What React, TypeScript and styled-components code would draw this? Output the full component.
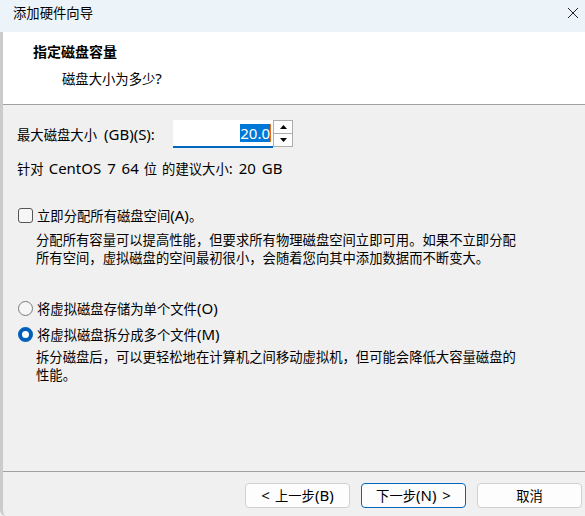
import React from "react";
import styled, { createGlobalStyle } from "styled-components";

const Global = createGlobalStyle`
  html, body { margin: 0; padding: 0; background: #f0f0f0; }
  body { font-family: "Noto Sans CJK SC", "Noto Sans", sans-serif; font-size: 13.33px; color: #000; }
  * { box-sizing: border-box; }
`;

const Window = styled.div`
  width: 585px;
  height: 516px;
  display: flex;
  flex-direction: column;
  overflow: hidden;
  font-family: "Noto Sans CJK SC", "Noto Sans", sans-serif;
  font-size: 13.33px;
`;

/* Latin run: the reference UI font draws Latin glyphs larger than CJK ones */
const L = styled.span`
  font-family: "Noto Sans", sans-serif;
  font-size: 15px;
  line-height: 18px;
`;

const TitleBar = styled.div`
  height: 32px;
  flex: none;
  background: #edf4f9;
  display: flex;
  align-items: center;
  justify-content: space-between;
  padding: 0 6px 0 13px;
`;

const TitleText = styled.span`
  line-height: 18px;
  margin-top: -6px;
`;

const CloseBtn = styled.div`
  width: 12px;
  height: 12px;
  margin-top: -6px;
  display: flex;
`;

const Frame = styled.div`
  flex: 1;
  display: flex;
  flex-direction: column;
  border-left: 3px solid #cbcbcb;
  border-bottom-left-radius: 6px;
  background: #f0f0f0;
`;

const Header = styled.div`
  height: 73px;
  flex: none;
  background: #fff;
  border-bottom: 1px solid #a0a0a0;
  padding: 10px 0 0 30px;
`;

const HeaderTitle = styled.div`
  font-weight: bold;
  font-size: 14px;
  line-height: 18px;
`;

const HeaderSub = styled.div`
  line-height: 18px;
  margin: 9px 0 0 29px;
`;

const Content = styled.div`
  flex: 1;
  padding: 15px 0 0 14px;
  display: flex;
  flex-direction: column;
`;

const SizeRow = styled.div`
  display: flex;
  align-items: center;
  height: 28px;
`;

const Label = styled.span`
  line-height: 18px;
  width: 156px;
  flex: none;
  word-spacing: 4px;
`;

const SpinInput = styled.div`
  width: 100px;
  height: 28px;
  background: #fff;
  border-bottom: 2px solid #0067c0;
  display: flex;
  align-items: center;
  justify-content: flex-end;
  padding-right: 2px;
`;

const Selected = styled.span`
  background: #0078d7;
  color: #fff;
  line-height: 18px;
  font-family: "Noto Sans", sans-serif;
  font-size: 15px;
`;

const Caret = styled.span`
  width: 1px;
  height: 18px;
  background: #e8701a;
`;

const SpinButtons = styled.div`
  width: 20px;
  height: 27px;
  display: flex;
  flex-direction: column;
  border: 1px solid #adadad;
  background: #fdfdfd;
  margin-top: -1px;
`;

const SpinBtn = styled.div<{ $down?: boolean }>`
  flex: 1;
  display: flex;
  align-items: center;
  justify-content: center;
  border-top: ${(p) => (p.$down ? "1px solid #adadad" : "none")};
`;

const Recommend = styled.div`
  line-height: 18px;
  margin-top: 11px;
  word-spacing: 2px;
`;

const OptionRow = styled.label<{ $mt: number }>`
  display: flex;
  align-items: center;
  gap: 4px;
  margin-top: ${(p) => p.$mt}px;
  line-height: 18px;
  height: 18px;
  margin-left: 1px;
`;

const CheckBox = styled.span`
  width: 15px;
  height: 15px;
  border: 1px solid #555;
  border-radius: 3px;
  background: #f6f6f6;
  flex: none;
`;

const Radio = styled.span<{ $on?: boolean }>`
  width: 15px;
  height: 15px;
  border-radius: 50%;
  flex: none;
  border: ${(p) => (p.$on ? "4px solid #005fb8" : "1px solid #7a7a7a")};
  background: ${(p) => (p.$on ? "#fff" : "#f6f6f6")};
`;

const Desc = styled.div<{ $mt: number }>`
  margin: ${(p) => p.$mt}px 0 0 19px;
  line-height: 18px;
`;

const Footer = styled.div`
  flex: none;
  height: 45px;
  border-top: 1px solid #a0a0a0;
  display: flex;
  justify-content: flex-end;
  align-items: flex-start;
  gap: 11px;
  padding: 11px 3px 0 0;
`;

const Button = styled.button<{ $primary?: boolean }>`
  width: 105px;
  height: 25px;
  border-radius: 4px;
  border: 1px solid ${(p) => (p.$primary ? "#0067c0" : "#d0d0d0")};
  background: #fdfdfd;
  font-family: "Noto Sans CJK SC", "Noto Sans", sans-serif;
  font-size: 13.33px;
  color: #000;
  padding: 0;
  line-height: 18px;
  word-spacing: 2px;
`;

export default function App() {
  return (
    <>
      <Global />
      <Window>
        <TitleBar>
          <TitleText>添加硬件向导</TitleText>
          <CloseBtn>
            <svg width="12" height="12" viewBox="0 0 12 12">
              <path d="M1 1 L11 11 M11 1 L1 11" stroke="#222" strokeWidth="1" fill="none" />
            </svg>
          </CloseBtn>
        </TitleBar>
        <Frame>
          <Header>
            <HeaderTitle>指定磁盘容量</HeaderTitle>
            <HeaderSub>磁盘大小为多少<L>?</L></HeaderSub>
          </Header>
          <Content>
            <SizeRow>
              <Label>最大磁盘大小 <L>(GB)(S):</L></Label>
              <SpinInput>
                <Selected>20.0</Selected>
                <Caret />
              </SpinInput>
              <SpinButtons>
                <SpinBtn>
                  <svg width="7" height="4" viewBox="0 0 7 4"><path d="M0 4 L3.5 0 L7 4 Z" fill="#000" /></svg>
                </SpinBtn>
                <SpinBtn $down>
                  <svg width="7" height="4" viewBox="0 0 7 4"><path d="M0 0 L3.5 4 L7 0 Z" fill="#000" /></svg>
                </SpinBtn>
              </SpinButtons>
            </SizeRow>
            <Recommend>
              针对 <L>CentOS 7 64</L> 位 的建议大小<L>: 20 GB</L>
            </Recommend>
            <OptionRow $mt={28}>
              <CheckBox />
              <span>立即分配所有磁盘空间<L>(A)</L>。</span>
            </OptionRow>
            <Desc $mt={7}>
              分配所有容量可以提高性能，但要求所有物理磁盘空间立即可用。如果不立即分配
              <br />
              所有空间，虚拟磁盘的空间最初很小，会随着您向其中添加数据而不断变大。
            </Desc>
            <OptionRow $mt={32}>
              <Radio />
              <span>将虚拟磁盘存储为单个文件<L>(O)</L></span>
            </OptionRow>
            <OptionRow $mt={8}>
              <Radio $on />
              <span>将虚拟磁盘拆分成多个文件<L>(M)</L></span>
            </OptionRow>
            <Desc $mt={5}>
              拆分磁盘后，可以更轻松地在计算机之间移动虚拟机，但可能会降低大容量磁盘的
              <br />
              性能。
            </Desc>
          </Content>
          <Footer>
            <Button><L>&lt;</L> 上一步<L>(B)</L></Button>
            <Button $primary>下一步<L>(N) &gt;</L></Button>
            <Button>取消</Button>
          </Footer>
        </Frame>
      </Window>
    </>
  );
}
